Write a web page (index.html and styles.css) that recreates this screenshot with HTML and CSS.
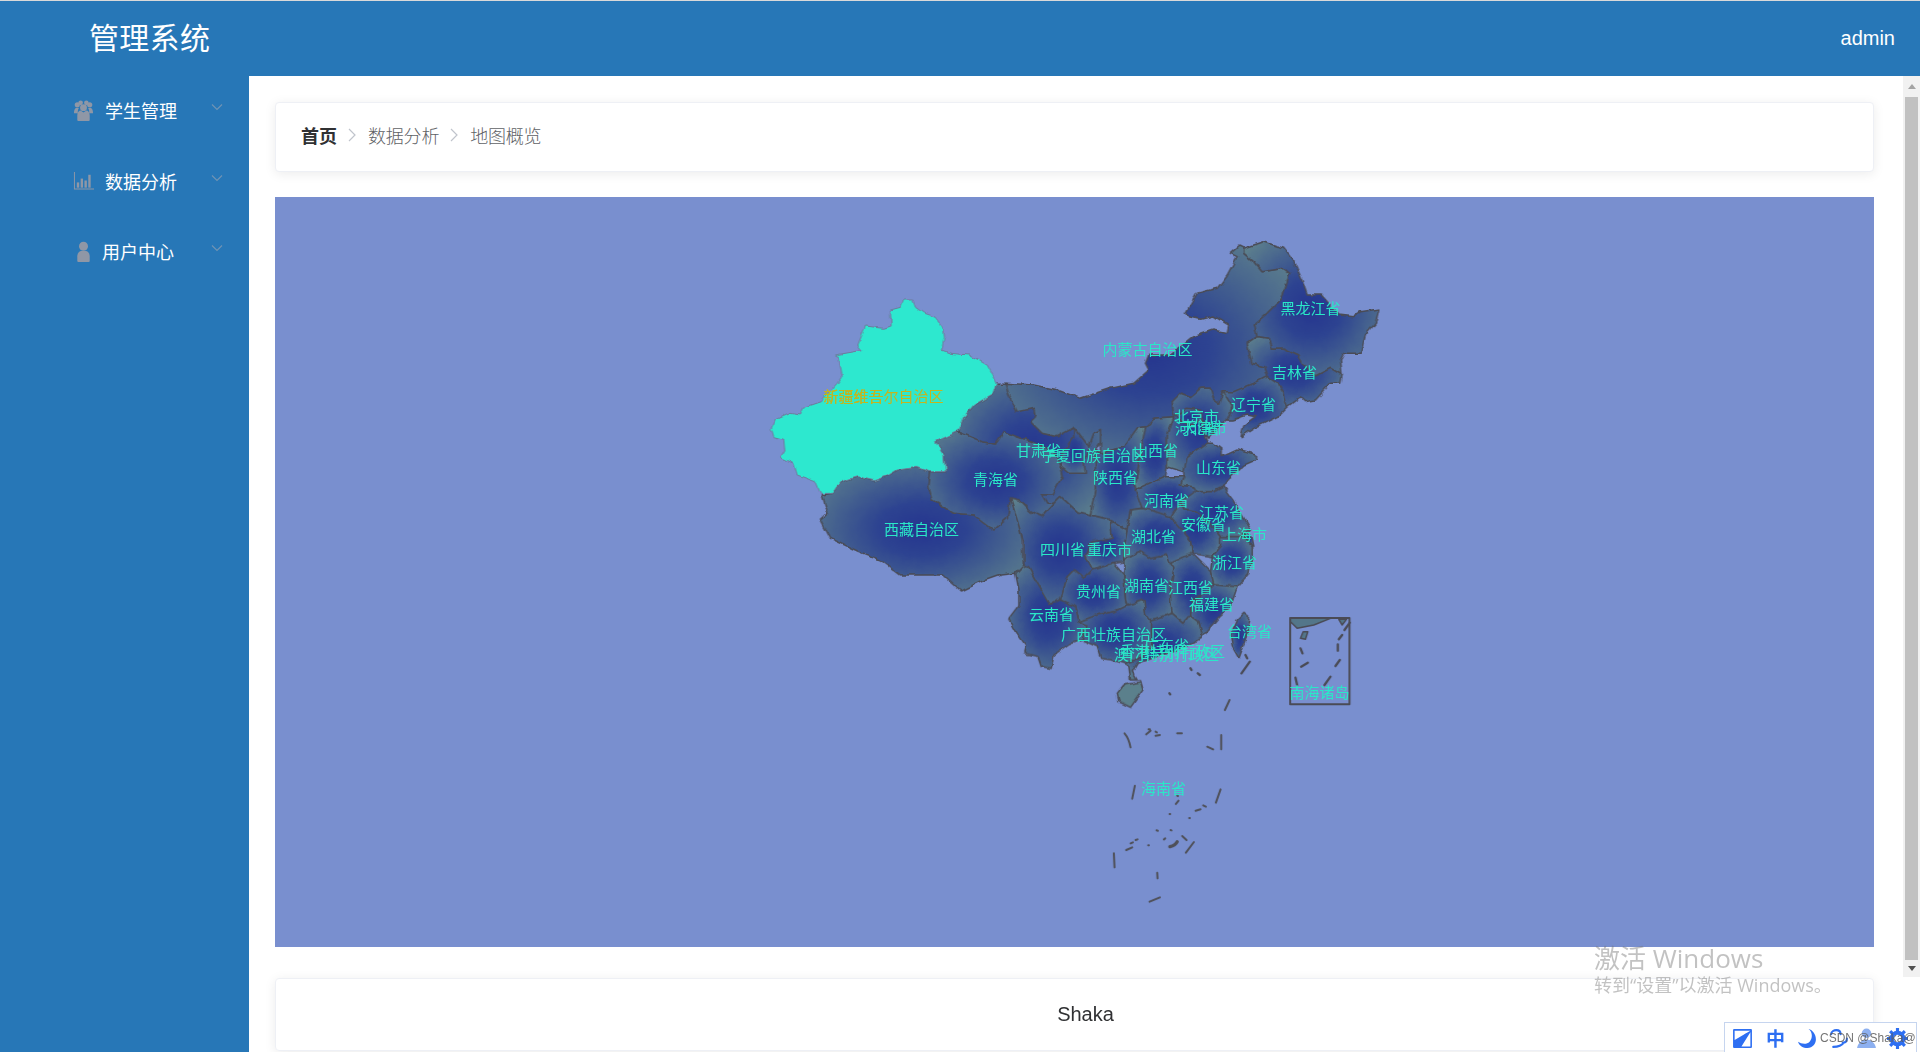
FILE: index.html
```html
<!DOCTYPE html>
<html lang="zh-CN">
<head>
<meta charset="utf-8">
<title>管理系统</title>
<link rel="stylesheet" href="styles.css">
</head>
<body>
<div class="app">
  <header class="topbar">
    <div class="brand">管理系统</div>
    <div class="user">admin</div>
  </header>
  <div class="body-row">
    <aside class="aside">
      <div class="menu-item">
        <svg class="menu-icon" viewBox="0 0 22 22"><circle cx="4.500" cy="5" r="2.700"/><circle cx="17.500" cy="5" r="2.700"/><circle cx="8" cy="3" r="2.400"/><circle cx="14" cy="3" r="2.400"/><circle cx="11" cy="8" r="3.600"/><path d="M1 14c0-4 1-6 3.500-6 .6 0 1.200.2 1.700.5C5 10 5 12 5 14zM21 14c0-4-1-6-3.500-6-.6 0-1.200.2-1.700.5C17 10 17 12 17 14zM4.500 21v-5c0-3 2-5 3.500-5l3 2 3-2c1.500 0 3.500 2 3.500 5v5c0 .6-.4 1-1 1h-11c-.6 0-1-.4-1-1z"/></svg>
        <span class="menu-text">学生管理</span>
        <svg class="chev" viewBox="0 0 12 8"><path d="M1 1.500 6 6.500 11 1.500"/></svg>
      </div>
      <div class="menu-item">
        <svg class="menu-icon" viewBox="0 0 22 22"><path d="M1 2v18.500h21v-1H2V2z"/><rect x="4" y="13" width="2.500" height="5.500"/><rect x="8" y="9" width="2.500" height="9.500"/><rect x="12" y="11" width="2.500" height="7.500"/><rect x="16" y="5" width="2.500" height="13.500"/></svg>
        <span class="menu-text">数据分析</span>
        <svg class="chev" viewBox="0 0 12 8"><path d="M1 1.500 6 6.500 11 1.500"/></svg>
      </div>
      <div class="menu-item menu-item-narrow">
        <svg class="menu-icon" viewBox="0 0 22 22"><circle cx="11" cy="5.500" r="4.700"/><path d="M4.500 21v-5c0-3.500 2.500-5.500 4-5.500h5c1.500 0 4 2 4 5.500v5c0 .6-.4 1-1 1h-11c-.6 0-1-.4-1-1z"/></svg>
        <span class="menu-text">用户中心</span>
        <svg class="chev" viewBox="0 0 12 8"><path d="M1 1.500 6 6.500 11 1.500"/></svg>
      </div>
    </aside>
    <main class="main">
      <nav class="card crumbs">
        <span class="crumb crumb-strong">首页</span>
        <svg class="crumb-sep" viewBox="0 0 8 14"><path d="M1 1 7 7 1 13"/></svg>
        <span class="crumb">数据分析</span>
        <svg class="crumb-sep" viewBox="0 0 8 14"><path d="M1 1 7 7 1 13"/></svg>
        <span class="crumb">地图概览</span>
      </nav>
      <section class="map-panel">
        <svg class="map" viewBox="275 197 1598 750">
          <defs>
            <radialGradient id="prov" cx=".5" cy=".5" r=".72">
              <stop offset="0" stop-color="#25358f"/>
              <stop offset=".3" stop-color="#2d4391"/>
              <stop offset="1" stop-color="#64898c"/>
            </radialGradient>
            <filter id="rough" filterUnits="userSpaceOnUse" x="275" y="197" width="1598" height="750" color-interpolation-filters="sRGB">
              <feTurbulence type="fractalNoise" baseFrequency=".11" numOctaves="2" seed="4" result="noise"/>
              <feDisplacementMap in="SourceGraphic" in2="noise" scale="5" xChannelSelector="R" yChannelSelector="G"/>
            </filter>
          </defs>
          <g filter="url(#rough)">
          <g transform="translate(740 220) scale(.33333)" fill="url(#prov)" stroke="#4a4b55" stroke-width="4.500" stroke-linejoin="round">
            <path d="M245 825 275 820 300 785 350 770 400 782 440 768 470 750 530 742 570 755 565 800 575 840 640 880 700 885 760 930 800 895 810 835 830 880 845 960 849 1035 825 1060 780 1065 720 1086 663 1113 609 1065 480 1065 420 1020 351 993 270 955 240 900 262 880Z"/>
            <path d="M570 755 615 755 610 705 585 665 652 635 690 650 725 665 765 672 790 635 830 650 880 665 940 695 960 740 965 770 935 825 905 825 920 850 940 850 905 890 870 875 835 840 810 835 800 895 760 930 700 885 640 880 575 840 565 800Z"/>
            <path d="M770 490 795 490 830 575 880 565 885 590 870 605 905 640 950 650 1000 622 1045 680 1060 640 1080 628 1085 660 1065 690 1065 800 1050 885 1010 875 960 830 940 850 920 850 905 825 935 825 965 770 960 740 940 695 880 665 830 650 790 635 765 672 725 665 690 650 652 635 670 590 700 555 760 520Z"/>
            <path d="M490 240 517 240 525 262 550 280 585 292 610 330 612 352 603 390 630 400 685 405 740 435 770 490 760 520 700 555 670 590 652 635 585 665 610 705 615 755 570 755 530 742 470 750 440 768 400 782 350 770 300 785 275 820 240 820 225 785 170 765 160 730 120 712 133 690 130 658 100 650 92 625 105 600 150 580 180 585 190 562 240 545 290 490 305 470 295 410 285 405 360 392 350 380 375 318 430 325 452 318 450 270 480 262Z" fill="#2de8cf" stroke="#6b7b9c" stroke-width="3"/>
          </g>
          <g transform="translate(1000 220) scale(.33333)" fill="url(#prov)" stroke="#4a4b55" stroke-width="4.500" stroke-linejoin="round">
            <path d="M15 490 100 495 170 510 240 535 330 505 400 490 445 450 435 430 445 405 510 405 580 350 640 330 680 338 685 315 640 288 600 298 565 290 555 280 590 220 650 205 680 165 710 110 690 100 715 78 730 85 730 100 760 125 785 155 850 145 868 160 845 235 800 280 762 312 770 350 740 370 755 430 790 440 800 470 760 490 700 515 668 515 655 550 640 540 630 505 600 505 570 530 540 520 515 545 520 590 460 595 435 620 410 625 370 680 300 700 300 628 280 640 265 680 222 622 170 650 125 640 90 605 105 590 100 565 50 575 25 525Z"/>
            <path d="M220 622 265 680 250 720 255 760 205 760 180 740 185 700 195 690 220 650Z"/>
            <path d="M730 85 790 65 850 85 880 125 905 180 920 222 960 222 1015 285 1060 290 1080 275 1135 267 1125 310 1095 345 1080 400 1030 400 1020 420 1025 465 990 445 945 468 905 430 895 405 850 385 815 385 805 355 770 350 762 312 800 280 845 235 868 160 850 145 785 155 760 125 730 100Z"/>
            <path d="M740 370 770 350 805 355 815 385 850 385 895 405 905 430 945 468 990 445 1025 465 1020 490 990 490 945 540 915 545 900 530 860 560 850 520 830 490 800 470 790 440 755 430Z"/>
            <path d="M668 515 700 515 760 490 800 470 830 490 850 520 860 560 830 590 790 610 760 625 722 650 730 615 765 590 740 585 695 600 680 600 695 560Z"/>
            <path d="M515 545 540 520 570 530 600 505 630 505 640 540 655 550 668 515 695 560 680 600 650 625 640 640 615 650 625 670 565 705 550 755 500 740 500 650 520 590Z"/>
            <path d="M525 585 560 565 600 570 610 600 575 615 545 610Z"/>
            <path d="M600 600 625 610 640 635 625 655 612 640Z"/>
            <path d="M460 595 520 590 500 650 500 740 495 770 410 810 405 790 420 700 410 665 435 620Z"/>
            <path d="M435 620 410 625 370 680 300 700 285 690 285 800 270 885 330 900 380 930 390 870 425 865 405 810 405 790 420 700Z"/>
            <path d="M405 810 495 770 550 770 540 795 580 800 590 815 600 840 575 885 510 890 440 880 425 865Z"/>
            <path d="M550 755 560 710 620 670 640 670 665 690 665 710 710 690 765 705 765 720 720 740 690 770 670 800 640 815 590 815 580 800 540 795 550 770Z"/>
          </g>
          <g transform="translate(980 500) scale(.33333)" fill="url(#prov)" stroke="#4a4b55" stroke-width="4.500" stroke-linejoin="round">
            <path d="M90 -6 115 0 150 35 185 50 220 10 240 -10 290 35 330 45 390 60 395 115 330 130 315 165 335 210 310 235 280 210 260 230 240 300 205 310 170 250 145 205 130 195 130 130 110 60Z"/>
            <path d="M390 60 440 90 430 145 430 185 400 190 335 210 315 165 330 130 395 115Z"/>
            <path d="M335 210 400 190 430 225 435 300 440 315 400 335 350 345 295 365 285 320 240 300 260 230 280 210 310 235Z"/>
            <path d="M145 205 170 250 205 310 240 300 285 320 295 365 320 375 305 420 270 430 220 465 212 505 185 500 175 470 130 460 135 435 110 400 85 355 115 315 115 270 105 220 130 195Z"/>
            <path d="M295 365 350 345 400 335 440 315 490 300 495 340 510 360 510 395 515 440 470 480 430 490 395 480 360 475 350 440 305 420 320 375Z"/>
            <path d="M430 180 480 155 510 175 560 165 580 205 570 265 570 300 575 340 545 350 510 360 495 340 490 300 440 315 435 300 430 225Z"/>
            <path d="M450 30 485 25 510 30 570 50 630 120 635 160 570 190 560 165 510 175 480 155 430 180 430 145 440 90Z"/>
            <path d="M570 190 635 160 690 215 700 255 660 290 635 300 630 345 610 370 575 340 570 300 570 265 580 205Z"/>
            <path d="M600 5 610 30 640 35 680 60 720 110 720 140 695 170 635 160 630 120 570 50Z"/>
            <path d="M640 -25 700 -25 730 -40 760 0 810 90 790 110 720 110 680 60 640 35 610 30 600 5Z"/>
            <path d="M720 110 790 110 815 140 815 165 805 220 770 260 700 255 690 215 695 170 720 140Z"/>
            <path d="M790 100 815 115 820 140 800 125Z"/>
            <path d="M700 255 770 260 750 320 720 345 665 410 655 365 630 345 635 300 660 290Z"/>
            <path d="M510 360 545 350 575 340 610 370 630 345 655 365 665 410 610 445 540 465 470 490 455 515 470 540 450 540 445 500 430 490 470 480 515 440 510 395Z"/>
            <path d="M430 555 480 545 487 570 450 622 415 605 410 580Z" fill="#5b808c"/>
            <path d="M790 340 808 355 795 420 775 475 755 440 750 405 770 360Z"/>
          </g>
          </g>
          <g transform="translate(980 500) scale(.33333)" fill="#53768a" stroke="#4a4b55" stroke-width="4.500" stroke-linejoin="round">
            <rect x="929" y="354" width="178" height="259" fill="none" stroke-width="6"/>
            <path d="M930 365 950 385 1000 375 1050 355 930 355ZM1075 358 1098 358 1085 375ZM960 415 968 395 982 395 975 418Z"/>
            <g fill="none" stroke-width="7" stroke-linecap="round">
              <path d="M960 445 966 460M982 488 962 500M1072 433 1072 452M1078 480 1065 498M1085 405 1075 418M1108 368 1092 390M945 533 950 555M1050 530 1032 555"/>
              <path d="M808 485 783 520M795 465 800 475M630 505 633 510M652 520 658 525M567 580 569 583"/>
            </g>
          </g>
          <g transform="translate(1080 700) scale(.33333)" fill="none" stroke="#4f5058" stroke-width="6" stroke-linecap="round">
            <path d="M447 0 433 30M132 100Q145 115 150 142M422 105 422 148M380 140 398 148M197 103 210 92M225 107 238 105M290 100 304 100M204 88 208 88M225 95 229 97M163 257 155 296M420 268 406 308M340 426 316 458M100 460 102 502M230 518 231 535M207 605 238 592M345 332 360 328M368 316 376 320M290 287 292 288M286 312 294 302M267 342 269 342M326 354 328 354M228 391 232 392M270 390 273 391M250 418 254 415M305 408 318 420M203 436 205 436M137 450 155 442M150 430 157 427M165 420 171 418"/>
            <path d="M268 440 Q285 436 290 425" stroke-width="10"/>
          </g>
          <g class="labels">
            <text class="label label-hot" x="883" y="395">新疆维吾尔自治区</text>
            <text class="label label-hot" x="853" y="395">新疆维吾</text>
            <text class="label" x="921" y="528">西藏自治区</text>
            <text class="label" x="995" y="478">青海省</text>
            <text class="label" x="1038" y="449">甘肃省</text>
            <text class="label" x="1093" y="454">宁夏回族自治区</text>
            <text class="label" x="1147" y="348">内蒙古自治区</text>
            <text class="label" x="1310" y="307">黑龙江省</text>
            <text class="label" x="1294" y="371">吉林省</text>
            <text class="label" x="1253" y="403">辽宁省</text>
            <text class="label" x="1196" y="415">北京市</text>
            <text class="label" x="1204" y="426">天津市</text>
            <text class="label" x="1197" y="427">河北省</text>
            <text class="label" x="1155" y="449">山西省</text>
            <text class="label" x="1218" y="466">山东省</text>
            <text class="label" x="1115" y="476">陕西省</text>
            <text class="label" x="1166" y="499">河南省</text>
            <text class="label" x="1221" y="511">江苏省</text>
            <text class="label" x="1203" y="523">安徽省</text>
            <text class="label" x="1244" y="533">上海市</text>
            <text class="label" x="1153" y="535">湖北省</text>
            <text class="label" x="1062" y="548">四川省</text>
            <text class="label" x="1109" y="548">重庆市</text>
            <text class="label" x="1234" y="561">浙江省</text>
            <text class="label" x="1146" y="584">湖南省</text>
            <text class="label" x="1190" y="586">江西省</text>
            <text class="label" x="1098" y="590">贵州省</text>
            <text class="label" x="1211" y="603">福建省</text>
            <text class="label" x="1051" y="613">云南省</text>
            <text class="label" x="1249" y="630">台湾省</text>
            <text class="label" x="1113" y="633">广西壮族自治区</text>
            <text class="label" x="1166" y="644">广东省</text>
            <text class="label" x="1172" y="650">香港特别行政区</text>
            <text class="label" x="1166" y="653">澳门特别行政区</text>
            <text class="label" x="1319" y="691">南海诸岛</text>
            <text class="label" x="1163" y="787">海南省</text>
          </g>
        </svg>
      </section>
      <footer class="card foot">Shaka</footer>
    </main>
    <div class="scrollbar">
      <div class="scroll-btn"><span class="arrow-up"></span></div>
      <div class="scroll-thumb"></div>
      <div class="scroll-btn scroll-btn-end"><span class="arrow-down"></span></div>
    </div>
  </div>
</div>
<div class="activate">
  <div class="activate-title">激活 Windows</div>
  <div class="activate-sub">转到“设置”以激活 Windows。</div>
</div>
<div class="ime">
  <svg class="ime-icon" viewBox="0 0 20 20"><path class="ime-solid" d="M2 1h16a1 1 0 0 1 1 1v16a1 1 0 0 1-1 1H2a1 1 0 0 1-1-1V2a1 1 0 0 1 1-1zm.5 1.500v9l15-9zM17.500 4 9 17.500h8.500z" fill-rule="evenodd"/><path class="ime-line" d="M14 6 9 11"/><circle class="ime-solid" cx="8.500" cy="11.500" r="1.800"/></svg>
  <span class="ime-zh">中</span>
  <svg class="ime-icon ime-moon" viewBox="0 0 20 20"><path class="ime-solid" d="M11 1c4 3 4 9 1 12S4 15 1 13c1 4 5 6 9 6 5 0 8-4 8-8 0-5-3-9-7-10z"/></svg>
  <svg class="ime-icon ime-swap" viewBox="0 0 20 20"><path class="ime-line" d="M3 6c0-3 3-4 5-4 3 0 4 2 4 4M14 14c3 0 4-2 4-4M5 18c4 0 8-1 10-4"/></svg>
  <svg class="ime-icon ime-person" viewBox="0 0 20 20"><circle class="ime-solid" cx="10" cy="5" r="4.500"/><path class="ime-solid" d="M1 19c1-5 5-8 9-8s8 3 9 8z"/></svg>
  <svg class="ime-icon ime-gear" viewBox="0 0 20 20"><circle class="ime-gear-ring" cx="10" cy="10" r="5.500"/><path class="ime-gear-teeth" d="M10 0v4M10 16v4M0 10h4M16 10h4M3 3l3 3M14 14l3 3M17 3l-3 3M6 14l-3 3"/></svg>
  <span class="ime-mark">CSDN @Shaka@</span>
</div>
</body>
</html>
```
FILE: styles.css
```css
* { box-sizing: border-box; }
html, body { margin: 0; height: 100%; overflow: hidden; background: #fff; }
body { font-family: "Liberation Sans", "Noto Sans CJK SC", sans-serif; position: relative; }
.app { height: 1052px; display: flex; flex-direction: column; border-top: 1px solid #d9d9d9; }
.topbar { height: 75px; flex: none; background: #2777b7; color: #fff; display: flex; align-items: center; justify-content: space-between; padding: 0 25px 0 89px; }
.brand { font-family: "Noto Sans CJK SC", sans-serif; font-size: 30px; line-height: 1; padding-bottom: 5px; letter-spacing: .3px; }
.user { font-size: 20px; }
.body-row { flex: 1; display: flex; min-height: 0; }
.aside { width: 249px; flex: none; background: #2777b7; display: flex; flex-direction: column; }
.menu-item { height: 70.500px; display: flex; align-items: center; padding-left: 73px; padding-right: 26px; padding-bottom: 2px; color: #fff; }
.menu-icon { width: 21px; height: 21px; flex: none; fill: #8f97a6; margin-right: 11px; }
.menu-item-narrow .menu-icon { margin-right: 8px; }
.menu-text { font-family: "Noto Sans CJK SC", sans-serif; font-size: 18px; line-height: 1; }
.chev { width: 12px; height: 8px; margin-left: auto; margin-bottom: 6px; fill: none; stroke: #6f93b4; stroke-width: 1.200; }
.main { flex: 1; min-width: 0; padding: 26px 29px 0 26px; display: flex; flex-direction: column; }
.card { background: #fff; border: 1px solid #eef0f5; border-radius: 4px; box-shadow: 0 2px 12px rgba(0, 0, 0, .08); }
.crumbs { height: 70px; flex: none; display: flex; align-items: center; padding: 0 0 5px 25px; font-family: "Noto Sans CJK SC", sans-serif; font-size: 18px; line-height: 1; }
.crumb { color: #606266; font-weight: 300; letter-spacing: -.2px; }
.crumb-strong { color: #303133; font-weight: 700; letter-spacing: 0; }
.crumb-sep { width: 8px; height: 14px; margin: 0 12px 0 11px; fill: none; stroke: #c0c4cc; stroke-width: 1.200; }
.map-panel { height: 750px; flex: none; margin-top: 25px; background: #798fcf; }
.map { display: block; width: 100%; height: 100%; }
.label { font-family: "Noto Sans CJK SC", sans-serif; font-size: 15px; font-weight: 400; fill: #2ae8c8; text-anchor: middle; dominant-baseline: central; }
.label-hot { fill: #c4b51e; }
.foot { height: 73px; flex: none; margin-top: 31px; padding-left: 22px; display: flex; align-items: center; justify-content: center; font-size: 20px; color: #303133; }
.scrollbar { width: 17px; flex: none; height: 901px; background: #f1f1f1; display: flex; flex-direction: column; }
.scroll-btn { height: 21px; flex: none; display: flex; align-items: center; justify-content: center; }
.scroll-btn-end { height: 17px; }
.scroll-thumb { flex: 1; margin: 0 2px; background: #c1c1c1; }
.arrow-up { border: 4.500px solid transparent; border-top: 0; border-bottom: 5px solid #a3a3a3; }
.arrow-down { border: 4.500px solid transparent; border-bottom: 0; border-top: 5px solid #505050; }
.activate { position: absolute; left: 1594px; top: 941px; color: rgba(120, 120, 120, .45); font-family: "Open Sans", "Noto Sans CJK SC", sans-serif; pointer-events: none; }
.activate-title { font-size: 26px; line-height: 34px; white-space: nowrap; }
.activate-sub { font-size: 18px; line-height: 20px; white-space: nowrap; }
.ime { position: absolute; left: 1724px; top: 1022px; width: 193px; height: 30px; background: #fff; border: 1px solid #c6d5ef; border-bottom: 0; }
.ime-icon { position: absolute; left: 7px; top: 5px; width: 21px; height: 21px; }
.ime-solid { fill: #2e6ff2; }
.ime-line { fill: none; stroke: #2e6ff2; stroke-width: 2; stroke-linecap: round; }
.ime-zh { position: absolute; left: 41px; top: 2px; font-family: "Noto Sans CJK SC", sans-serif; font-size: 19px; line-height: 26px; font-weight: 700; color: #2e6ff2; }
.ime-moon { left: 72px; }
.ime-swap { left: 103px; }
.ime-person { left: 131px; }
.ime-person circle, .ime-person path { fill: #8db0f0; }
.ime-gear { left: 162px; }
.ime-gear-ring { fill: none; stroke: #2e6ff2; stroke-width: 4; }
.ime-gear-teeth { stroke: #2e6ff2; stroke-width: 3; }
.ime-mark { position: absolute; left: 95px; top: 7px; font-size: 12px; line-height: 16px; color: rgba(90, 90, 90, .85); white-space: nowrap; }
```
